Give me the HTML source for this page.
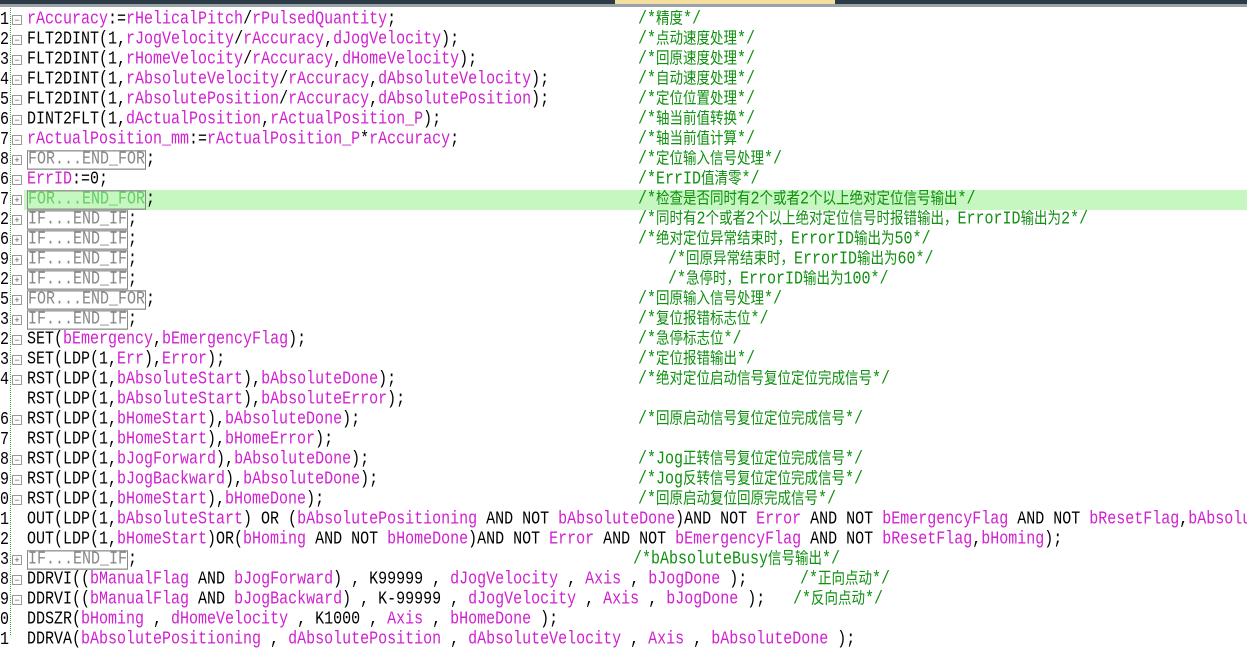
<!DOCTYPE html>
<html><head><meta charset="utf-8"><style>
body{margin:0;width:1247px;height:635px;overflow:hidden;background:#fff;position:relative;font-family:"Liberation Mono","Noto Sans CJK SC",monospace;font-size:15px;color:#000}
.top{position:absolute;left:0;top:0;width:1247px;height:4px;background:#2b3a45}
.tab{position:absolute;left:615px;top:0;width:220px;height:4px;background:#f5dfa0}
.gl{position:absolute;left:0;top:4px;width:1247px;height:3px;background:#9aa3a8}
.r{position:absolute;left:0;height:20px;line-height:20px;width:1247px;white-space:pre;overflow:hidden;margin-top:2px}
.n{position:absolute;left:0;width:9px;text-align:left;transform:scaleY(1.25)}
.f{position:absolute;left:12px;top:5px;width:8px;height:8px;border:1px solid #999;font-size:9px;line-height:8px;text-align:center;color:#555;font-family:"Liberation Sans",sans-serif}
.k{position:absolute;left:27px;transform:scaleY(1.22);transform-origin:0 50%}
.c{position:absolute;color:#109010;transform:scaleY(1.22);transform-origin:0 50%}
.m{color:#d020d0}
.b{color:#888;border:1px solid #888;padding:0;line-height:14px;display:inline-block;height:14px}
.dot{position:absolute;left:10px;top:8px;height:627px;border-left:1px dotted #3a3}
i{font-style:normal;font-size:13.5px}
</style></head><body>
<div class="top"></div><div class="tab"></div><div class="gl"></div>
<div style="position:absolute;top:190px;left:24px;width:1223px;height:20px;background:#c6f7c0"></div>
<div class="dot"></div>

<div class="r" style="top:8px"><span class="n">1</span><span class="f">−</span><span class="k"><span class="m">rAccuracy</span>:=<span class="m">rHelicalPitch</span>/<span class="m">rPulsedQuantity</span>;</span><span class="c" style="left:638px">/*<i>精度</i>*/</span></div>
<div class="r" style="top:28px"><span class="n">2</span><span class="f">−</span><span class="k">FLT2DINT(1,<span class="m">rJogVelocity</span>/<span class="m">rAccuracy</span>,<span class="m">dJogVelocity</span>);</span><span class="c" style="left:638px">/*<i>点动速度处理</i>*/</span></div>
<div class="r" style="top:48px"><span class="n">3</span><span class="f">−</span><span class="k">FLT2DINT(1,<span class="m">rHomeVelocity</span>/<span class="m">rAccuracy</span>,<span class="m">dHomeVelocity</span>);</span><span class="c" style="left:638px">/*<i>回原速度处理</i>*/</span></div>
<div class="r" style="top:68px"><span class="n">4</span><span class="f">−</span><span class="k">FLT2DINT(1,<span class="m">rAbsoluteVelocity</span>/<span class="m">rAccuracy</span>,<span class="m">dAbsoluteVelocity</span>);</span><span class="c" style="left:638px">/*<i>自动速度处理</i>*/</span></div>
<div class="r" style="top:88px"><span class="n">5</span><span class="f">−</span><span class="k">FLT2DINT(1,<span class="m">rAbsolutePosition</span>/<span class="m">rAccuracy</span>,<span class="m">dAbsolutePosition</span>);</span><span class="c" style="left:638px">/*<i>定位位置处理</i>*/</span></div>
<div class="r" style="top:108px"><span class="n">6</span><span class="f">−</span><span class="k">DINT2FLT(1,<span class="m">dActualPosition</span>,<span class="m">rActualPosition_P</span>);</span><span class="c" style="left:638px">/*<i>轴当前值转换</i>*/</span></div>
<div class="r" style="top:128px"><span class="n">7</span><span class="f">−</span><span class="k"><span class="m">rActualPosition_mm</span>:=<span class="m">rActualPosition_P</span>*<span class="m">rAccuracy</span>;</span><span class="c" style="left:638px">/*<i>轴当前值计算</i>*/</span></div>
<div class="r" style="top:148px"><span class="n">8</span><span class="f">+</span><span class="k"><span class="b">FOR...END_FOR</span>;</span><span class="c" style="left:638px">/*<i>定位输入信号处理</i>*/</span></div>
<div class="r" style="top:168px"><span class="n">6</span><span class="f">−</span><span class="k"><span class="m">ErrID</span>:=0;</span><span class="c" style="left:638px">/*ErrID<i>值清零</i>*/</span></div>
<div class="r" style="top:188px"><span class="n">7</span><span class="f">+</span><span class="k"><span class="b" style="color:#6c6">FOR...END_FOR</span>;</span><span class="c" style="left:638px">/*<i>检查是否同时有</i>2<i>个或者</i>2<i>个以上绝对定位信号输出</i>*/</span></div>
<div class="r" style="top:208px"><span class="n">2</span><span class="f">+</span><span class="k"><span class="b">IF...END_IF</span>;</span><span class="c" style="left:638px">/*<i>同时有</i>2<i>个或者</i>2<i>个以上绝对定位信号时报错输出，</i>ErrorID<i>输出为</i>2*/</span></div>
<div class="r" style="top:228px"><span class="n">6</span><span class="f">+</span><span class="k"><span class="b">IF...END_IF</span>;</span><span class="c" style="left:638px">/*<i>绝对定位异常结束时，</i>ErrorID<i>输出为</i>50*/</span></div>
<div class="r" style="top:248px"><span class="n">9</span><span class="f">+</span><span class="k"><span class="b">IF...END_IF</span>;</span><span class="c" style="left:668px">/*<i>回原异常结束时，</i>ErrorID<i>输出为</i>60*/</span></div>
<div class="r" style="top:268px"><span class="n">2</span><span class="f">+</span><span class="k"><span class="b">IF...END_IF</span>;</span><span class="c" style="left:668px">/*<i>急停时，</i>ErrorID<i>输出为</i>100*/</span></div>
<div class="r" style="top:288px"><span class="n">5</span><span class="f">+</span><span class="k"><span class="b">FOR...END_FOR</span>;</span><span class="c" style="left:638px">/*<i>回原输入信号处理</i>*/</span></div>
<div class="r" style="top:308px"><span class="n">3</span><span class="f">+</span><span class="k"><span class="b">IF...END_IF</span>;</span><span class="c" style="left:638px">/*<i>复位报错标志位</i>*/</span></div>
<div class="r" style="top:328px"><span class="n">2</span><span class="f">−</span><span class="k">SET(<span class="m">bEmergency</span>,<span class="m">bEmergencyFlag</span>);</span><span class="c" style="left:638px">/*<i>急停标志位</i>*/</span></div>
<div class="r" style="top:348px"><span class="n">3</span><span class="f">−</span><span class="k">SET(LDP(1,<span class="m">Err</span>),<span class="m">Error</span>);</span><span class="c" style="left:638px">/*<i>定位报错输出</i>*/</span></div>
<div class="r" style="top:368px"><span class="n">4</span><span class="f">−</span><span class="k">RST(LDP(1,<span class="m">bAbsoluteStart</span>),<span class="m">bAbsoluteDone</span>);</span><span class="c" style="left:638px">/*<i>绝对定位启动信号复位定位完成信号</i>*/</span></div>
<div class="r" style="top:388px"><span class="k">RST(LDP(1,<span class="m">bAbsoluteStart</span>),<span class="m">bAbsoluteError</span>);</span></div>
<div class="r" style="top:408px"><span class="n">6</span><span class="f">−</span><span class="k">RST(LDP(1,<span class="m">bHomeStart</span>),<span class="m">bAbsoluteDone</span>);</span><span class="c" style="left:638px">/*<i>回原启动信号复位定位完成信号</i>*/</span></div>
<div class="r" style="top:428px"><span class="n">7</span><span class="k">RST(LDP(1,<span class="m">bHomeStart</span>),<span class="m">bHomeError</span>);</span></div>
<div class="r" style="top:448px"><span class="n">8</span><span class="f">−</span><span class="k">RST(LDP(1,<span class="m">bJogForward</span>),<span class="m">bAbsoluteDone</span>);</span><span class="c" style="left:638px">/*Jog<i>正转信号复位定位完成信号</i>*/</span></div>
<div class="r" style="top:468px"><span class="n">9</span><span class="f">−</span><span class="k">RST(LDP(1,<span class="m">bJogBackward</span>),<span class="m">bAbsoluteDone</span>);</span><span class="c" style="left:638px">/*Jog<i>反转信号复位定位完成信号</i>*/</span></div>
<div class="r" style="top:488px"><span class="n">0</span><span class="f">−</span><span class="k">RST(LDP(1,<span class="m">bHomeStart</span>),<span class="m">bHomeDone</span>);</span><span class="c" style="left:638px">/*<i>回原启动复位回原完成信号</i>*/</span></div>
<div class="r" style="top:508px"><span class="n">1</span><span class="k">OUT(LDP(1,<span class="m">bAbsoluteStart</span>) OR (<span class="m">bAbsolutePositioning</span> AND NOT <span class="m">bAbsoluteDone</span>)AND NOT <span class="m">Error</span> AND NOT <span class="m">bEmergencyFlag</span> AND NOT <span class="m">bResetFlag</span>,<span class="m">bAbsolu</span></span></div>
<div class="r" style="top:528px"><span class="n">2</span><span class="k">OUT(LDP(1,<span class="m">bHomeStart</span>)OR(<span class="m">bHoming</span> AND NOT <span class="m">bHomeDone</span>)AND NOT <span class="m">Error</span> AND NOT <span class="m">bEmergencyFlag</span> AND NOT <span class="m">bResetFlag</span>,<span class="m">bHoming</span>);</span></div>
<div class="r" style="top:548px"><span class="n">3</span><span class="f">+</span><span class="k"><span class="b">IF...END_IF</span>;</span><span class="c" style="left:633px">/*bAbsoluteBusy<i>信号输出</i>*/</span></div>
<div class="r" style="top:568px"><span class="n">8</span><span class="f">−</span><span class="k">DDRVI((<span class="m">bManualFlag</span> AND <span class="m">bJogForward</span>) , K99999 , <span class="m">dJogVelocity</span> , <span class="m">Axis</span> , <span class="m">bJogDone</span> );</span><span class="c" style="left:800px">/*<i>正向点动</i>*/</span></div>
<div class="r" style="top:588px"><span class="n">9</span><span class="f">−</span><span class="k">DDRVI((<span class="m">bManualFlag</span> AND <span class="m">bJogBackward</span>) , K-99999 , <span class="m">dJogVelocity</span> , <span class="m">Axis</span> , <span class="m">bJogDone</span> );</span><span class="c" style="left:793px">/*<i>反向点动</i>*/</span></div>
<div class="r" style="top:608px"><span class="n">0</span><span class="k">DDSZR(<span class="m">bHoming</span> , <span class="m">dHomeVelocity</span> , K1000 , <span class="m">Axis</span> , <span class="m">bHomeDone</span> );</span></div>
<div class="r" style="top:628px"><span class="n">1</span><span class="k">DDRVA(<span class="m">bAbsolutePositioning</span> , <span class="m">dAbsolutePosition</span> , <span class="m">dAbsoluteVelocity</span> , <span class="m">Axis</span> , <span class="m">bAbsoluteDone</span> );</span></div>
</body></html>
